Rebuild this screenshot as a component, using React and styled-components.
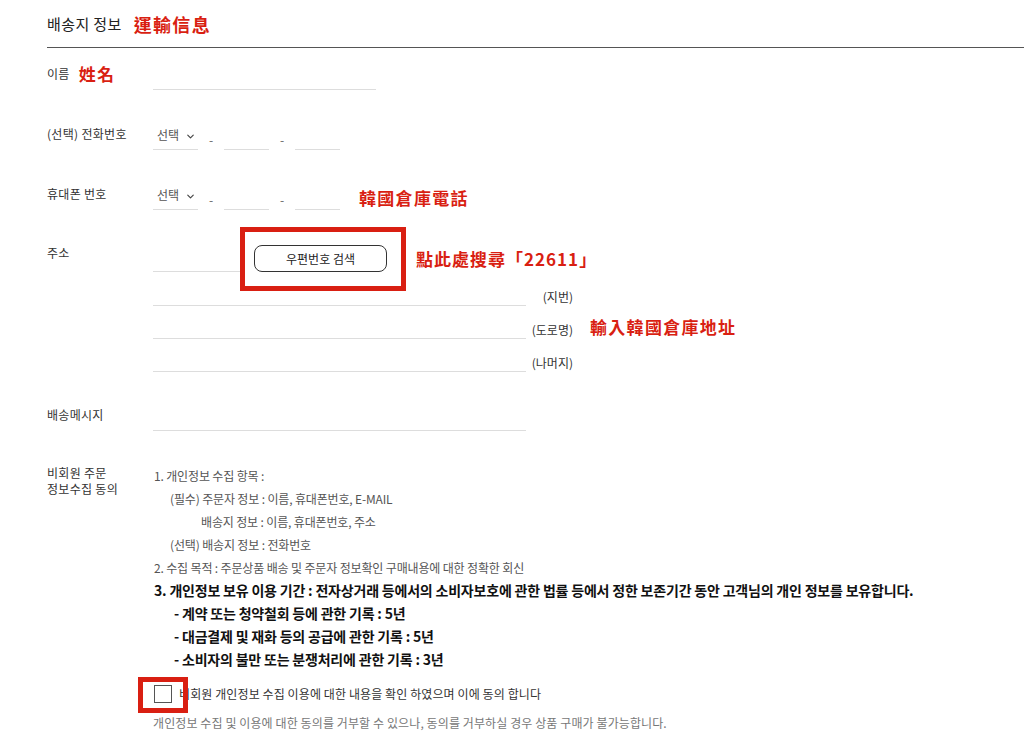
import React from 'react';
import styled, { createGlobalStyle } from 'styled-components';
import { ChevronDown } from 'lucide-react';

const GlobalStyle = createGlobalStyle`
  html, body {
    margin: 0;
    padding: 0;
    background: #fff;
  }
  body {
    font-family: "Noto Sans CJK KR", "Noto Sans", sans-serif;
    color: #333;
  }
`;

const RED = '#d91f12';

const Page = styled.div`
  width: 1024px;
  height: 756px;
  overflow: hidden;
  padding-left: 47px;
  box-sizing: border-box;
`;

const Header = styled.div`
  height: 47px;
  display: flex;
  align-items: center;
  border-bottom: 1px solid #555;
`;

const Title = styled.span`
  font-size: 15px;
  color: #222;
  letter-spacing: 0.4px;
`;

const Note = styled.span`
  font-family: "Noto Sans CJK TC", sans-serif;
  font-weight: 700;
  font-size: ${(p) => p.$size || 17}px;
  letter-spacing: 1.3px;
  color: ${RED};
  margin-left: ${(p) => p.$gap || 0}px;
  line-height: 20px;
  white-space: nowrap;
`;

const Row = styled.div`
  display: grid;
  grid-template-columns: 106px 1fr;
  align-items: start;
  margin-top: ${(p) => p.$top}px;
`;

const Label = styled.div`
  font-size: 12px;
  line-height: 16px;
  color: #333;
  letter-spacing: 0.3px;
  display: flex;
  align-items: center;
  margin-top: ${(p) => p.$offset || 0}px;
`;

const Field = styled.div`
  display: flex;
  align-items: ${(p) => p.$align || 'flex-end'};
`;

const Input = styled.input`
  box-sizing: border-box;
  width: ${(p) => p.$w}px;
  height: 24px;
  border: none;
  border-bottom: 1px solid #ddd;
  outline: none;
  padding: 0 4px;
  font-family: inherit;
  font-size: 12px;
  background: transparent;
`;

const Select = styled.div`
  box-sizing: border-box;
  width: 45px;
  height: 24px;
  border-bottom: 1px solid #ddd;
  display: flex;
  align-items: flex-start;
  padding-left: 4px;
  font-size: 12px;
  line-height: 18px;
  color: #555;
  gap: 6px;
  svg {
    margin-top: 5px;
  }
`;

const Dash = styled.span`
  width: 26px;
  text-align: center;
  font-size: 12px;
  color: #666;
  align-self: flex-end;
  padding-bottom: 2px;
`;

const ZipButton = styled.button`
  position: relative;
  box-sizing: border-box;
  width: 133px;
  height: 27px;
  margin-left: 14px;
  border: 1px solid #333;
  border-radius: 8px;
  background: #fff;
  font-family: inherit;
  font-size: 12px;
  color: #222;
  letter-spacing: 0;
  padding: 0;
`;

const RedFrame = styled.span`
  position: absolute;
  left: ${(p) => p.$l}px;
  top: ${(p) => p.$t}px;
  width: ${(p) => p.$w}px;
  height: ${(p) => p.$h}px;
  border: 5px solid ${RED};
  box-sizing: border-box;
  pointer-events: none;
`;

const AddrStack = styled.div`
  display: flex;
  flex-direction: column;
  gap: 9px;
  margin-top: 10px;
  margin-left: 106px;
`;

const AddrLine = styled.div`
  display: flex;
  align-items: flex-end;
`;

const AddrTag = styled.span`
  width: 42px;
  margin-left: 5px;
  text-align: right;
  font-size: 12px;
  line-height: 16px;
  color: #333;
  margin-bottom: 1px;
`;

const Terms = styled.div`
  font-size: 12px;
  line-height: 23px;
  color: #555;
  letter-spacing: -0.15px;
  margin-top: -1px;
  padding-left: 1px;
`;

const Line = styled.div`
  padding-left: ${(p) => p.$indent || 0}px;
  white-space: nowrap;
  ${(p) =>
    p.$strong &&
    `
    font-size: 14px;
    font-weight: 700;
    color: #111;
    letter-spacing: -0.2px;
  `}
`;

const AgreeRow = styled.label`
  display: flex;
  align-items: center;
  gap: 7px;
  height: 23px;
  margin-top: 11px;
  margin-left: 107px;
  font-size: 12px;
  color: #333;
  letter-spacing: 0.1px;
`;

const BoxWrap = styled.span`
  position: relative;
  display: inline-flex;
`;

const Check = styled.span`
  width: 18px;
  height: 18px;
  box-sizing: border-box;
  border: 1px solid #555;
  background: #fff;
`;

const Hint = styled.div`
  margin-top: 6px;
  margin-left: 106px;
  font-size: 12px;
  line-height: 23px;
  color: #777;
  letter-spacing: 0.1px;
`;

export default function App() {
  return (
    <Page>
      <GlobalStyle />
      <Header>
        <Title>배송지 정보</Title>
        <Note $gap={12} $size={18}>運輸信息</Note>
      </Header>

      <Row $top={18}>
        <Label $offset={-2}>
          이름
          <Note $gap={9}>姓名</Note>
        </Label>
        <Field>
          <Input $w={223} />
        </Field>
      </Row>

      <Row $top={36}>
        <Label>(선택) 전화번호</Label>
        <Field>
          <Select>
            선택 <ChevronDown size={11} strokeWidth={2.5} color="#444" />
          </Select>
          <Dash>-</Dash>
          <Input $w={45} />
          <Dash>-</Dash>
          <Input $w={45} />
        </Field>
      </Row>

      <Row $top={36}>
        <Label>휴대폰 번호</Label>
        <Field>
          <Select>
            선택 <ChevronDown size={11} strokeWidth={2.5} color="#444" />
          </Select>
          <Dash>-</Dash>
          <Input $w={45} />
          <Dash>-</Dash>
          <Input $w={45} />
          <Note $gap={19} style={{ alignSelf: 'center' }}>
            韓國倉庫電話
          </Note>
        </Field>
      </Row>

      <Row $top={35}>
        <Label>주소</Label>
        <Field>
          <Input $w={87} />
          <ZipButton type="button">
            우편번호 검색
            <RedFrame $l={-15} $t={-19} $w={166} $h={64} />
          </ZipButton>
          <Note $gap={29} style={{ alignSelf: 'center', letterSpacing: '1px' }}>
            點此處搜尋「22611」
          </Note>
        </Field>
      </Row>

      <AddrStack>
        <AddrLine>
          <Input $w={373} />
          <AddrTag>(지번)</AddrTag>
        </AddrLine>
        <AddrLine>
          <Input $w={373} />
          <AddrTag>(도로명)</AddrTag>
          <Note $gap={17} style={{ alignSelf: 'center' }}>
            輸入韓國倉庫地址
          </Note>
        </AddrLine>
        <AddrLine>
          <Input $w={373} />
          <AddrTag>(나머지)</AddrTag>
        </AddrLine>
      </AddrStack>

      <Row $top={35}>
        <Label>배송메시지</Label>
        <Field>
          <Input $w={373} />
        </Field>
      </Row>

      <Row $top={34}>
        <Label>
          비회원 주문
          <br />
          정보수집 동의
        </Label>
        <Terms>
          <Line>1. 개인정보 수집 항목 :</Line>
          <Line $indent={16}>(필수) 주문자 정보 : 이름, 휴대폰번호, E-MAIL</Line>
          <Line $indent={47}>배송지 정보 : 이름, 휴대폰번호, 주소</Line>
          <Line $indent={16}>(선택) 배송지 정보 : 전화번호</Line>
          <Line>2. 수집 목적 : 주문상품 배송 및 주문자 정보확인 구매내용에 대한 정확한 회신</Line>
          <Line $strong>
            3. 개인정보 보유 이용 기간 : 전자상거래 등에서의 소비자보호에 관한 법률 등에서 정한 보존기간 동안 고객님의 개인 정보를 보유합니다.
          </Line>
          <Line $strong $indent={20}>- 계약 또는 청약철회 등에 관한 기록 : 5년</Line>
          <Line $strong $indent={20}>- 대금결제 및 재화 등의 공급에 관한 기록 : 5년</Line>
          <Line $strong $indent={20}>- 소비자의 불만 또는 분쟁처리에 관한 기록 : 3년</Line>
        </Terms>
      </Row>

      <AgreeRow>
        <BoxWrap>
          <Check />
          <RedFrame $l={-16} $t={-8} $w={50} $h={36} />
        </BoxWrap>
        비회원 개인정보 수집 이용에 대한 내용을 확인 하였으며 이에 동의 합니다
      </AgreeRow>
      <Hint>
        개인정보 수집 및 이용에 대한 동의를 거부할 수 있으나, 동의를 거부하실 경우 상품 구매가 불가능합니다.
      </Hint>
    </Page>
  );
}
